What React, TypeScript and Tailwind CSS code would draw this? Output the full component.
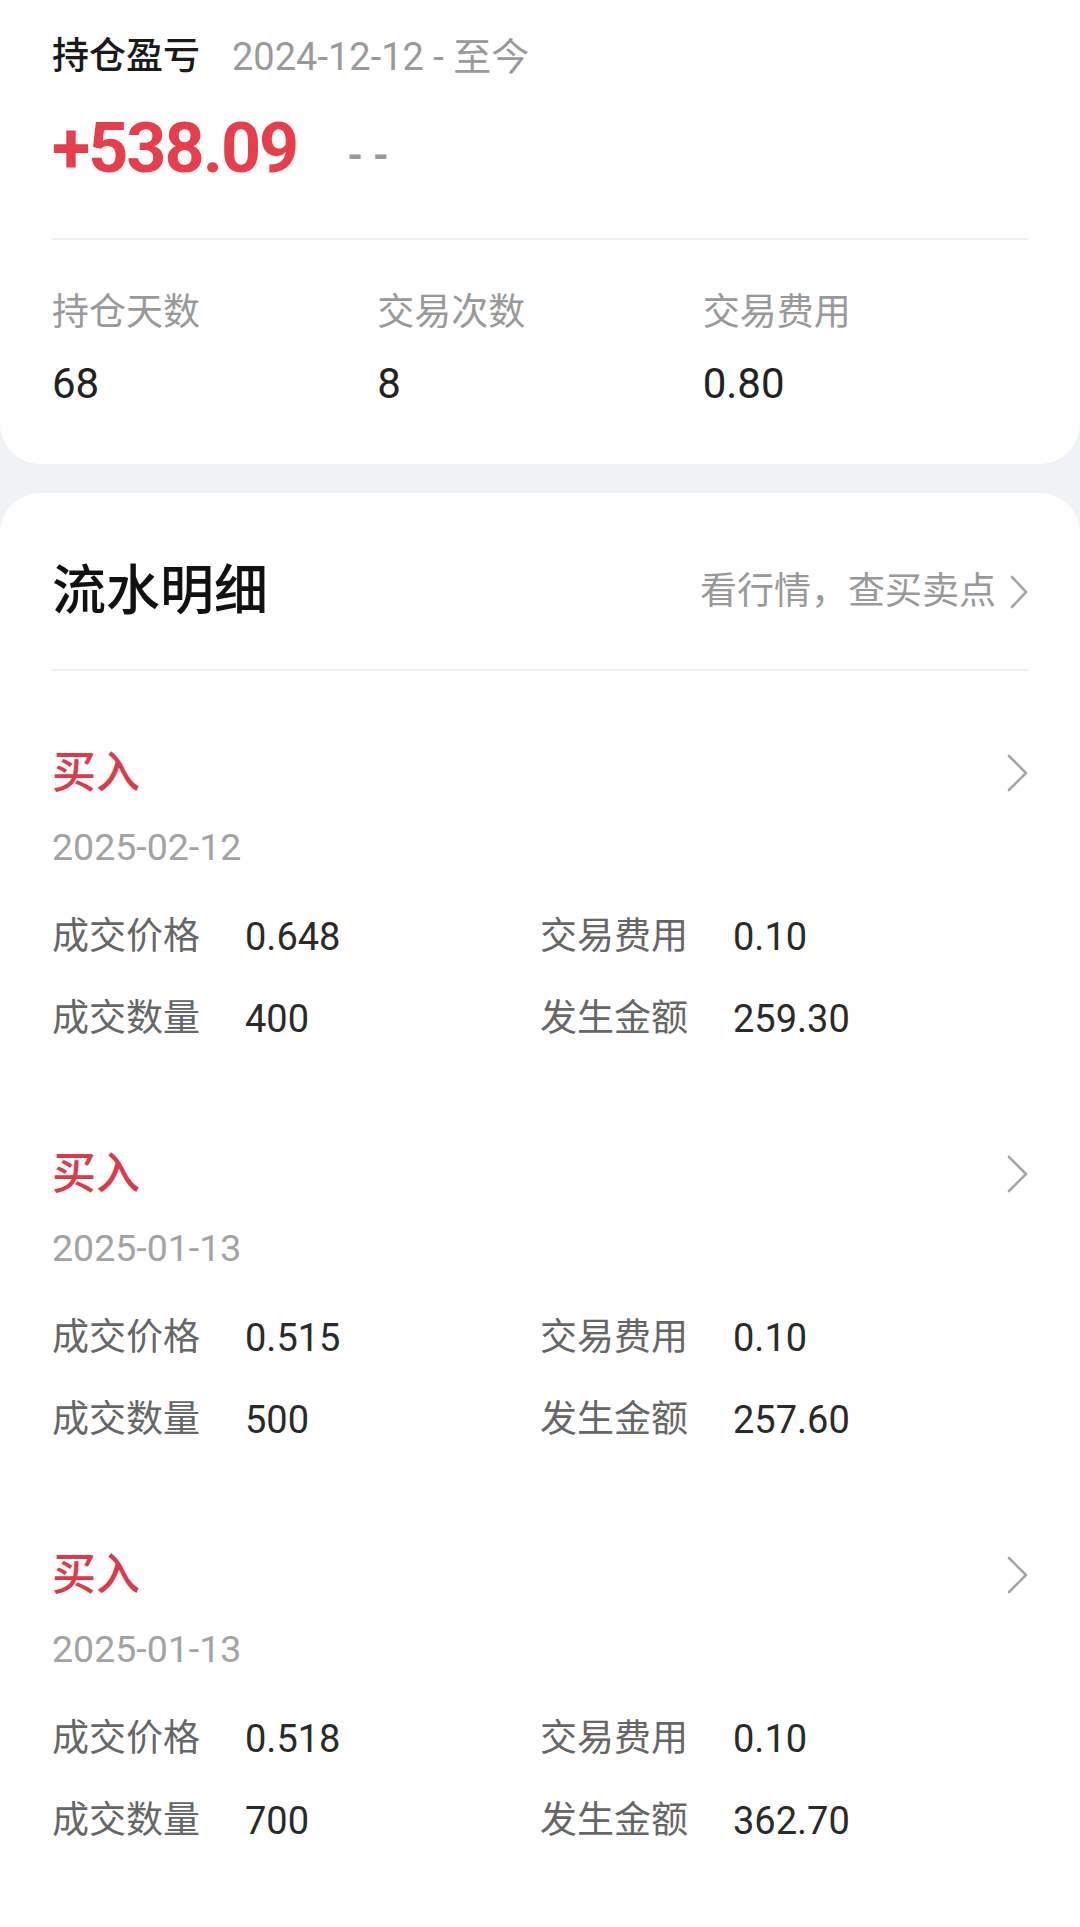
const trades = [
  { date: "2025-02-12", price: "0.648", fee: "0.10", qty: "400", amount: "259.30" },
  { date: "2025-01-13", price: "0.515", fee: "0.10", qty: "500", amount: "257.60" },
  { date: "2025-01-13", price: "0.518", fee: "0.10", qty: "700", amount: "362.70" },
]

function Chevron({ w, h }: { w: number; h: number }) {
  return (
    <svg width={w} height={h} viewBox={`0 0 ${w} ${h}`} fill="none">
      <polyline
        points={`2,2 ${w - 2},${h / 2} 2,${h - 2}`}
        stroke="#a6a6a6"
        strokeWidth="2.6"
        strokeLinecap="round"
        strokeLinejoin="round"
      />
    </svg>
  )
}

function Field({ label, value }: { label: string; value: string }) {
  return (
    <div className="flex items-center h-[50px]">
      <span className="w-[193px] text-[37px] leading-[50px] text-[#666]">{label}</span>
      <span className="text-[38px] leading-[50px] text-[#2a2a2a]">{value}</span>
    </div>
  )
}

export default function App() {
  return (
    <div className="w-[1080px] min-h-[1927px] bg-[#f1f2f6] flex flex-col font-['Roboto','Noto_Sans_CJK_SC',sans-serif]">
      {/* 持仓盈亏 */}
      <section className="bg-white rounded-b-[40px] px-[52px] pt-[32px] pb-[52px]">
        <div className="flex items-center h-[50px]">
          <span className="text-[37px] leading-[50px] text-[#1a1a1a] font-medium">持仓盈亏</span>
          <span className="ml-[32px] text-[38px] leading-[50px] text-[#9a9a9a]">2024-12-12 - 至今</span>
        </div>

        <div className="flex items-center mt-[26px] h-[80px]">
          <span className="text-[70px] leading-[80px] font-bold tracking-[-2px] text-[#e83d4b]">+538.09</span>
          <span className="ml-[50px] mt-[16px] text-[40px] leading-[40px] font-bold text-[#9a9a9a]">- -</span>
        </div>

        <div className="mt-[50px] h-[2px] bg-[#efefef]" />

        <div className="grid grid-cols-3 mt-[48px]">
          {[
            ["持仓天数", "68"],
            ["交易次数", "8"],
            ["交易费用", "0.80"],
          ].map(([label, value]) => (
            <div key={label} className="flex flex-col">
              <span className="text-[37px] leading-[50px] text-[#999]">{label}</span>
              <span className="mt-[18px] text-[42px] leading-[56px] text-[#222]">{value}</span>
            </div>
          ))}
        </div>
      </section>

      {/* 流水明细 */}
      <section className="flex-1 mt-[29px] bg-white rounded-t-[40px] px-[52px] pt-[64px]">
        <div className="flex items-center justify-between h-[70px]">
          <h2 className="text-[54px] leading-[70px] font-medium text-[#111]">流水明细</h2>
          <div className="flex items-center gap-[14px]">
            <span className="text-[37px] leading-[50px] text-[#999]">看行情，查买卖点</span>
            <Chevron w={18} h={34} />
          </div>
        </div>

        <div className="mt-[42px] h-[2px] bg-[#efefef]" />

        {trades.map((t, i) => (
          <div key={i} className="pt-[72px] pb-[28px]">
            <div className="flex items-center justify-between h-[60px]">
              <span className="text-[44px] leading-[60px] font-medium text-[#dc3a49]">买入</span>
              <Chevron w={21} h={38} />
            </div>
            <div className="mt-[20px] text-[37.5px] leading-[48px] text-[#a3a3a3]">{t.date}</div>
            <div className="grid grid-cols-2 mt-[41px] gap-y-[32px]">
              <Field label="成交价格" value={t.price} />
              <Field label="交易费用" value={t.fee} />
              <Field label="成交数量" value={t.qty} />
              <Field label="发生金额" value={t.amount} />
            </div>
          </div>
        ))}
      </section>
    </div>
  )
}
